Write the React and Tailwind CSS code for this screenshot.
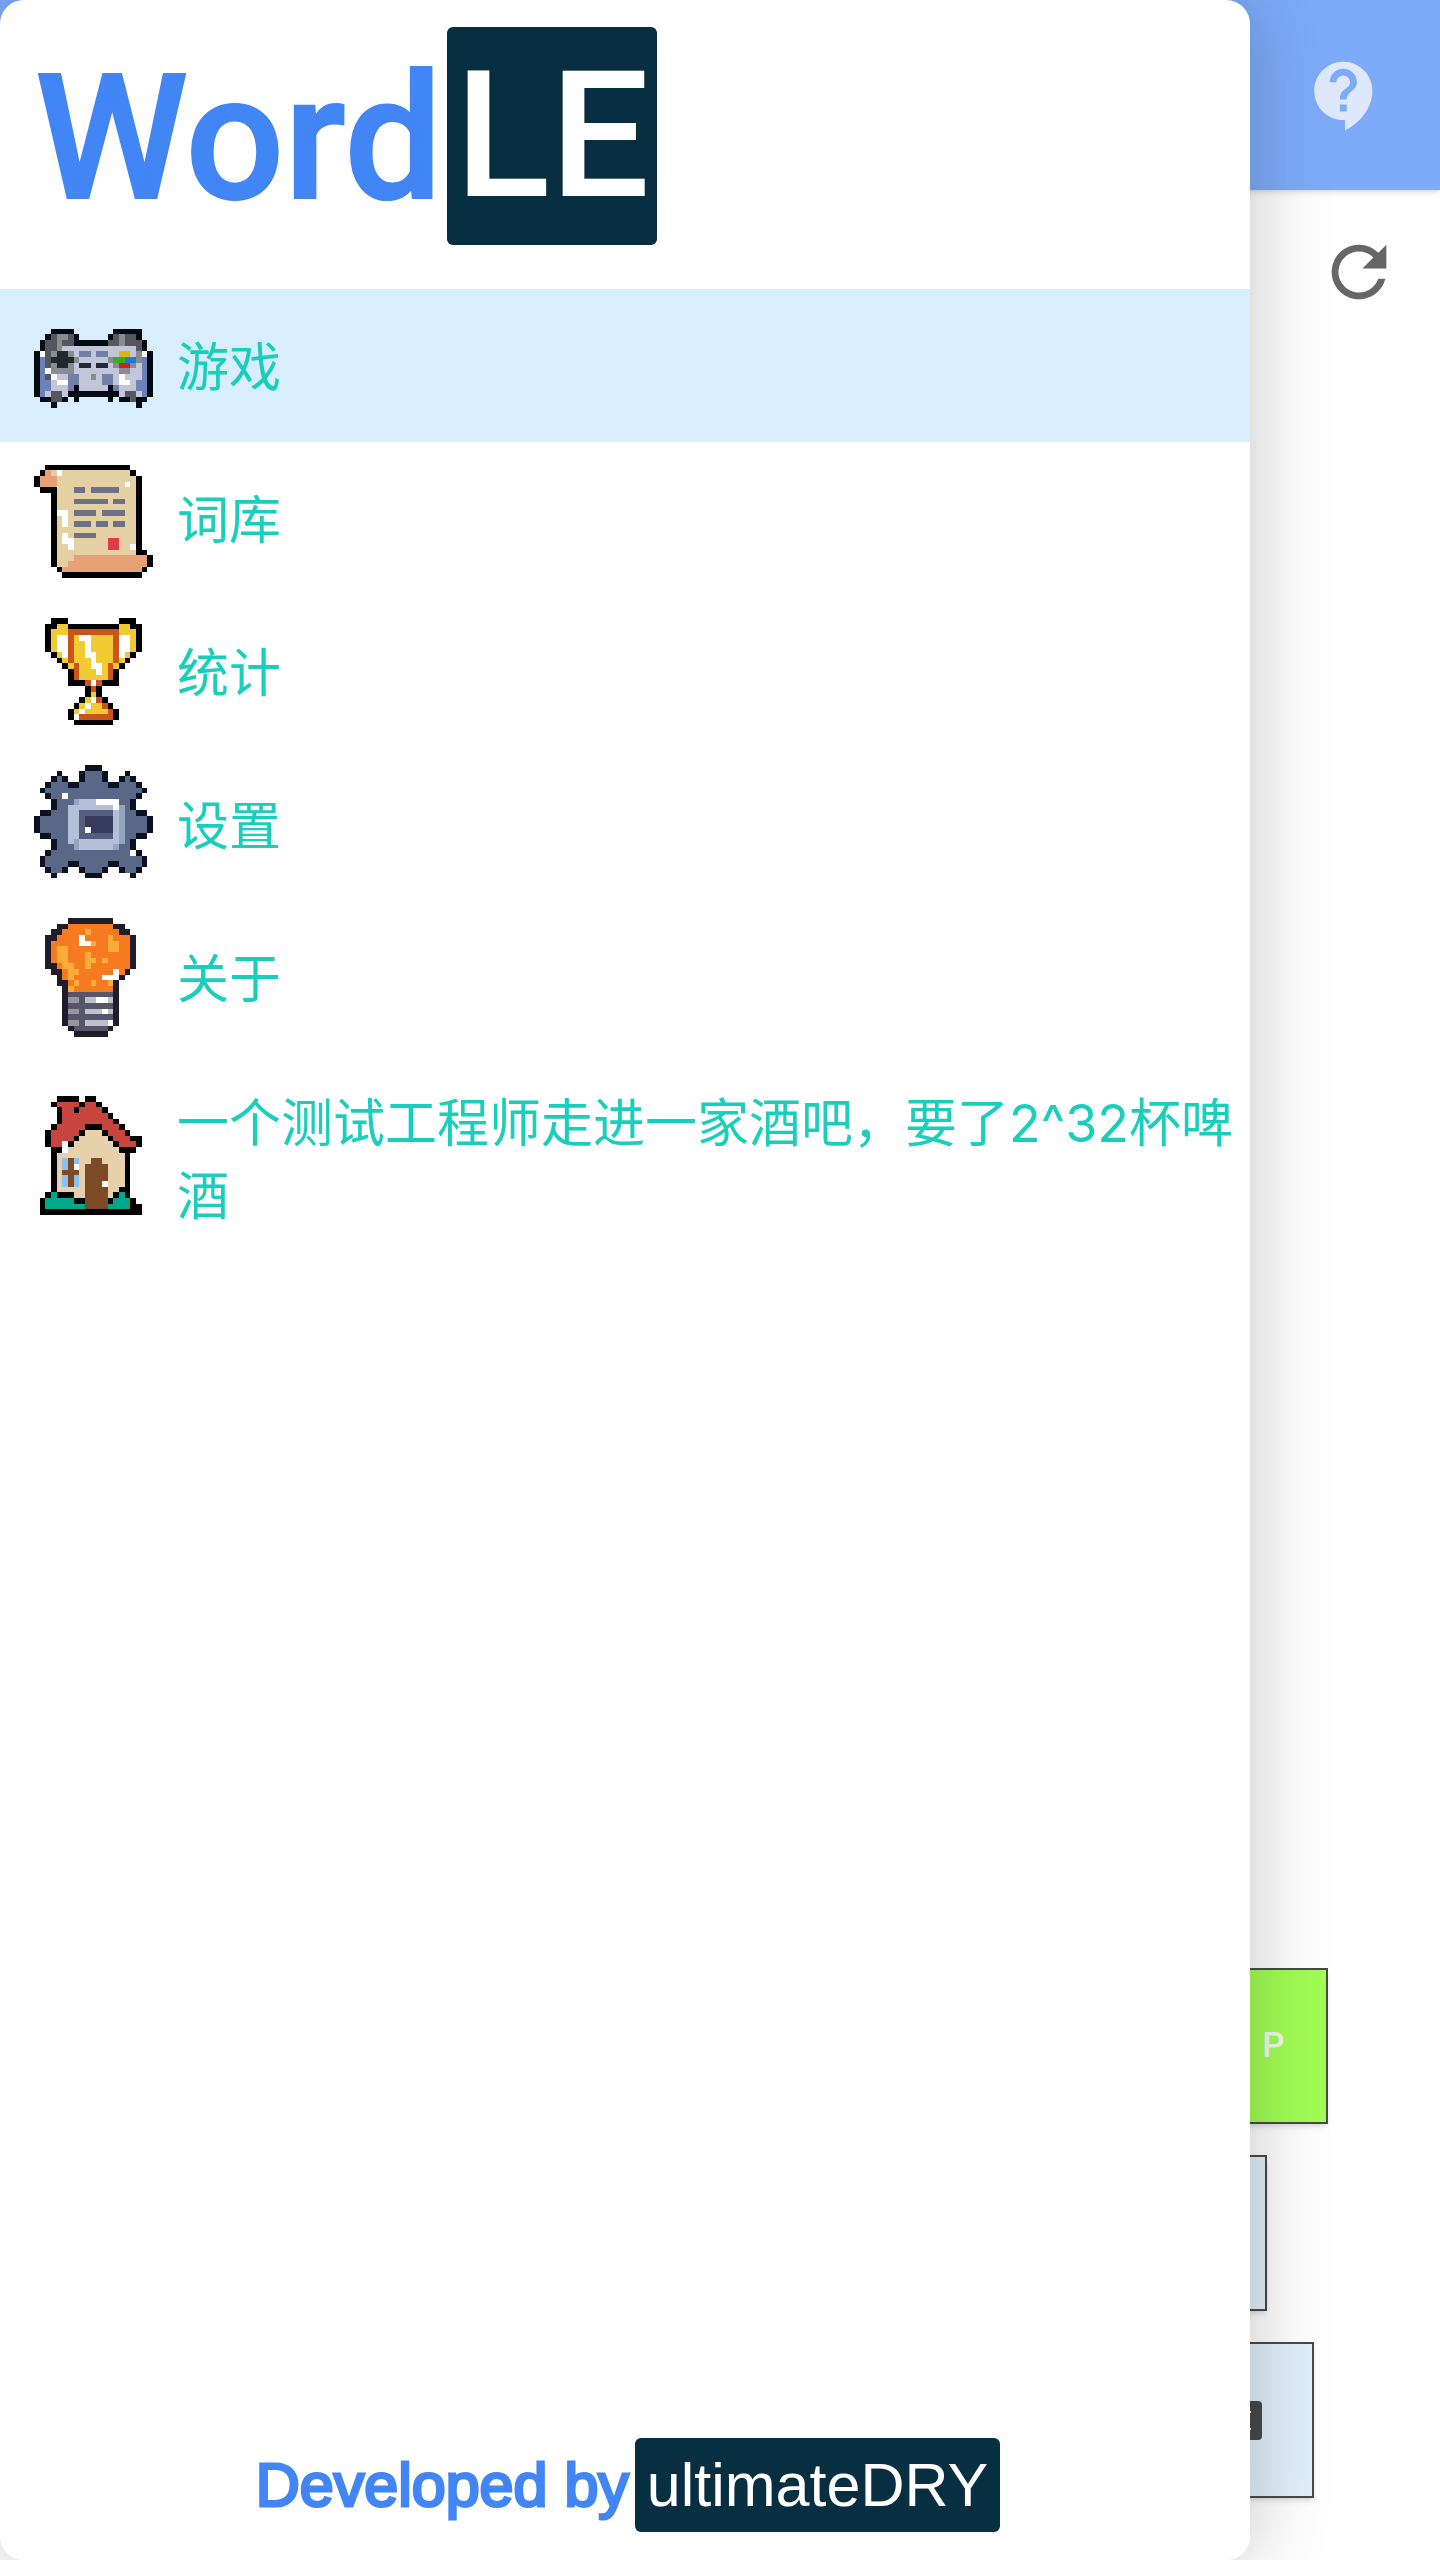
import React from "react";

const palette = {
  K: "#020a14", G: "#55565e", g: "#8b8b92", L: "#c3c6d8", W: "#ffffff", B: "#6c81b8",
  S: "#7080a6", D: "#222931", Y: "#ddb40c", N: "#2fb31c", U: "#1f78e0", R: "#d0201f",
  k: "#000000", P: "#e5d0a4", O: "#e6a274", s: "#6c7186", r: "#e03a44",
  y: "#f2cb34", o: "#cb5418",
  n: "#0a1122", m: "#586886", a: "#b4bfd8", b: "#96a4c2", c: "#565d7e", d: "#363a5c",
  v: "#1f1d2c", F: "#f57a20", f: "#fdac38", h: "#56556a", i: "#9795a2", j: "#c2c0cf",
  A: "#c8443f", C: "#e6d1ac", E: "#7c4a24", Z: "#8fbfec", T: "#00a78c",
};

const gamepad = [
  ".....................",
  "...KKKK.......KKKKK..",
  "..KGggGK.....KGgGGK..",
  ".KGGgGGKKKKKKGGgGGGK.",
  ".KGGgLLLLLLLLLLLLLGK.",
  "KWGgDDgLSSLSSLLYYLgWK",
  "KBGDDDDgLLLLLgNNUUgBK",
  "KBGgDDgLDDLDDLgRRgLBK",
  "KBWggggLLLLLLLLggLLBK",
  "KBGWLLSSLLgLSSLWLLLBK",
  "KBBLWWSSLLLLSSLWWLBBK",
  "KBBLLLSKLLLLLKSLLLBBK",
  "KBLGGLKKKKKKKKKLGGLBK",
  ".KKGGK.K.....K.KKGKK.",
  "...K..............K..",
];

const scroll = [
  ".....................",
  "..kkkkkkkkkkkkkkk....",
  ".kOPWPPPPPPPPPPPPk...",
  "kOOOPPPPPPPPPPPPPPk..",
  "kOOOPPPPPPPPPPPPWPk..",
  ".kkkPPPssPsssssPPPk..",
  "...kPPPPPPPPPPPPPPk..",
  "...kPPPssssssPssPPk..",
  "...kPPPPPPPPPPPPPPk..",
  "...kWWPssssPssssPPk..",
  "...kPWPPPPPPPPPPPPk..",
  "...kPWPsssPssPssPPk..",
  "...kPPPPPPPPPPPPPPk..",
  "...kPWPssssPPPPPPPk..",
  "...kPWWPPPPPPrrPPPk..",
  "...kPPWPPPPPPrrPPWk..",
  "...kPPPPPPPPPPPPPPkk.",
  "...kPPPOOOOOOOOOOOOOk",
  "...kPPOOOOOOOOOOOOOOk",
  "....kOOOOOOOOOOOOOOk.",
  ".....kkkkkkkkkkkkkk..",
];

const trophy = [
  "...kkk.........kkk...",
  "..kkyykkkkkkkkkyykk..",
  "..kyyyoooooooooyyyk..",
  "..kyWWoyWWyyyyoWWyk..",
  "..kyWWoyyWyyyyoWWyk..",
  "..kyWWoyyWyyyyoWWyk..",
  "...kyWoyyWWyyyoWyk...",
  "....kyoyyyWyyyoyk....",
  ".....kyoyyWWyoyk.....",
  "......koyyyWyok......",
  "......koyyyyyok......",
  "......kkkoWokkk......",
  ".........kok.........",
  ".........kyk.........",
  "........kyWok........",
  ".......kyWyyok.......",
  "......kyWyyyyok......",
  "......kWooooook......",
  ".......kkkkkkk.......",
];

const gear = [
  ".........nnn.........",
  "....n...nmmmn...n....",
  "...nmn..nmmmn..nmn...",
  "..nmmmnnmmmmmnnmmmn..",
  ".nmmmmmmmmmmmmmmmmmn.",
  "..nmmWmmmmmmmmmmmmn..",
  "...nmmmbaaaWWWWmmn...",
  "...nmmaaaaaaaaWbmn...",
  ".nnmmmaaccccccabmmnn.",
  "nmmmmmaacdddddabmmmmn",
  "nmmmmmaacdddddabmmmmn",
  "nmmmmmaacWddddabmmmmn",
  ".nnmmmaaccccccabmmnn.",
  "...nmmabaaaaaaabmn...",
  "...nmmmbaaaaaabmmn...",
  "..nmmmmmmmmmmmmmmWn..",
  ".nmmmmmmmmmmmmmmmmmn.",
  ".nmmmmnnmmmmmnnmmmmn.",
  "..nmmn..nmmmn..nmmn..",
  "...n.....nnn.....n...",
  ".....................",
];

const bulb = [
  "......vvvvvvvv.......",
  "....vvFFFFFFFFvv.....",
  "...vvFFFFfFFFFFvv....",
  "..vvFFFFWFFFFfFFFv...",
  "..vFFFFFWWfFFffFFv...",
  "..vFffFFFFFFFffFFv...",
  "..vFffFFFfFFFFFFFv...",
  "..vFffFFFffFfFFFFv...",
  "..vvFffFFfFFFFFFFv...",
  "...vvFffFFFFFFWFv....",
  "....vFfFFFFFWWWv.....",
  "....vvFfFFfFFfv......",
  ".....vfFFFFFFFv......",
  ".....vhhhhhhhhv......",
  ".....viihjjWWjv......",
  ".....vhhhhhhhhv......",
  ".....viihjjjWjv......",
  ".....vhhhhhhhhv......",
  ".....viihjjjjWv......",
  "......vhhhhhhv.......",
  ".......vvvvvv........",
];

const house = [
  "....kkkk.kk..........",
  "...kAAAAkAAk.........",
  "....kAAkAAAAk........",
  "....kAAAAAAAAk.......",
  "....kAAAAAAAAAk......",
  "...kAAAAAkkkAAAk.....",
  "..kAAAAAkCCCkAAAk....",
  "..kAAAAkCCCCCkAAAkk..",
  "..kAAWkCCCCCCCkAAAk..",
  "...kkWCCCCCCCCCkkk...",
  "...kCCCCCCCCCCCCk....",
  "...kCZEZCCEECCCCk....",
  "...kCZEWCEEEECCCk....",
  "...kCEEECEEEECCCk....",
  "...kCZEZCEEEECCCk....",
  "...kCZEZCEEEWCCCk....",
  "...kCCCCCEEEECCkk....",
  "..kTkkkCCEEEECkTk....",
  ".kTTTTTkkEEEEkTTTk...",
  ".kTTTTTTTEEEETTTTkk..",
  ".kkkkkkkkkkkkkkkkkk..",
  ".....................",
];

function PixelIcon({ rows }) {
  return (
    <svg
      viewBox={`0 0 21 ${rows.length}`}
      className="w-[119px] shrink-0"
      shapeRendering="crispEdges"
      aria-hidden="true"
    >
      {rows.flatMap((row, y) =>
        [...row].map((c, x) =>
          palette[c] ? <rect key={`${x}-${y}`} x={x} y={y} width="1" height="1" fill={palette[c]} /> : null
        )
      )}
    </svg>
  );
}

const items = [
  { label: "游戏", icon: gamepad, active: true },
  { label: "词库", icon: scroll },
  { label: "统计", icon: trophy },
  { label: "设置", icon: gear },
  { label: "关于", icon: bulb },
  { label: "一个测试工程师走进一家酒吧，要了2^32杯啤酒", icon: house },
];

function Drawer() {
  return (
    <aside className="absolute inset-y-0 left-0 flex w-[86.8%] flex-col overflow-hidden rounded-3xl bg-white">
      <h1 className="flex h-[289px] items-start pt-[27px] pl-[35px] font-['Roboto',sans-serif] leading-none">
        <span className="w-[412px] text-[174px] leading-[224px] font-medium whitespace-nowrap text-[#4285f4] [-webkit-text-stroke:2px_#4285f4]">Word</span>
        <span className="rounded-md bg-[#082f41] px-2 text-[176px] leading-[218px] font-medium text-white">LE</span>
      </h1>
      <nav>
        <ul>
          {items.map((item) => (
            <li key={item.label}>
              <a
                href="#"
                aria-current={item.active ? "page" : undefined}
                className={
                  "flex min-h-[153px] items-center gap-6 py-[29px] pr-3 pl-[34px] " +
                  (item.active ? "bg-[#d8eefd]" : "")
                }
              >
                <span className="-my-4 flex">
                  <PixelIcon rows={item.icon} />
                </span>
                <span className="pt-1 font-['Inter','Noto_Sans_CJK_SC',sans-serif] text-[52px] leading-[73px] text-[#19cfbb]">
                  {item.label}
                </span>
              </a>
            </li>
          ))}
        </ul>
      </nav>
      <footer className="mt-auto mb-7 flex items-center justify-center gap-1.5 pl-1.5 text-[61px] leading-[94px]">
        <span className="text-[#4285f4] [-webkit-text-stroke:3px_#4285f4]">Developed by</span>
        <span className="rounded-md bg-[#082f41] px-3 text-white">ultimateDRY</span>
      </footer>
    </aside>
  );
}

const keyBase = "flex h-[156px] items-center border-2 border-[#48494c] shadow-md";

export default function App() {
  return (
    <div className="relative flex min-h-screen flex-col overflow-hidden bg-[#fefefe] font-['Liberation_Sans','Noto_Sans_CJK_SC',sans-serif]">
      <header className="flex h-[190px] items-center justify-end bg-[#7dabf9] pt-0.5 pr-[54px] shadow-md">
        <button type="button" aria-label="帮助">
          <svg viewBox="0 0 24 24" className="size-[82px] fill-[#dfe8fa]" aria-hidden="true">
            <path d="M11.5 2C6.81 2 3 5.81 3 10.5S6.81 19 11.5 19h.5v3c4.86-2.34 8-7 8-11.5C20 5.81 16.19 2 11.5 2zm1 14.5h-2v-2h2v2zm0-3.5h-2c0-3.25 3-3 3-5 0-1.1-.9-2-2-2s-2 .9-2 2h-2c0-2.21 1.79-4 4-4s4 1.79 4 4c0 2.5-3 2.75-3 5z" />
          </svg>
        </button>
      </header>
      <main className="flex grow flex-col">
        <div className="flex justify-end pt-[41px] pr-[40px]">
          <button type="button" aria-label="刷新">
            <svg viewBox="0 0 24 24" className="size-[82px] fill-[#666666]" aria-hidden="true">
              <path d="M17.65 6.35A7.96 7.96 0 0 0 12 4a8 8 0 1 0 7.73 10h-2.08A6 6 0 1 1 12 6c1.66 0 3.14.69 4.22 1.78L13 11h7V4l-2.35 2.35z" />
            </svg>
          </button>
        </div>
        <div className="mt-auto mb-[62px] flex flex-col items-end gap-[31px]">
          <button type="button" className={keyBase + " mr-[112px] w-[109px] justify-center bg-[#a1fd54] font-['Roboto',sans-serif] text-[35px] font-medium text-[#f1f8e9]"}>
            P
          </button>
          <button type="button" aria-label="L" className={keyBase + " mr-[173px] w-[109px] bg-[#e1effa]"} />
          <button type="button" aria-label="删除" className={keyBase + " mr-[126px] w-[160px] justify-end bg-[#e1effa] pr-[50px]"}>
            <svg viewBox="0 0 48 39" className="h-[39px] w-12" aria-hidden="true">
              <rect width="48" height="39" rx="4" fill="#48494c" />
              <path d="M29 11h8M29 28h8" stroke="#e1effa" strokeWidth="2" />
            </svg>
          </button>
        </div>
      </main>
      <div className="pointer-events-none absolute inset-y-0 left-0 w-[86.8%] rounded-3xl shadow-[0_0_80px_rgba(0,0,0,0.23)]" />
      <Drawer />
    </div>
  );
}
